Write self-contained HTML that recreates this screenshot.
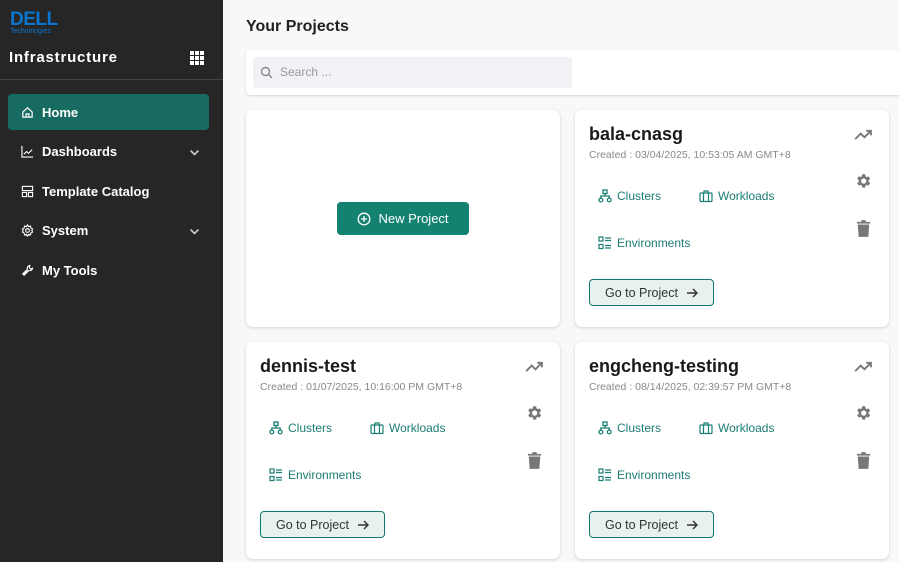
<!DOCTYPE html>
<html><head><meta charset="utf-8"><style>
*{margin:0;padding:0;box-sizing:border-box}
body{width:899px;height:562px;overflow:hidden;font-family:"Liberation Sans",sans-serif;background:#f7f8fa;position:relative}
.sb{position:absolute;left:0;top:0;width:223px;height:562px;background:#262626;color:#fff}
.logo{position:absolute;left:10px;top:11px;color:#0a76d0;font-weight:bold;font-size:19px;letter-spacing:-0.5px;line-height:17px}
.logo small{display:block;font-size:7px;font-weight:normal;letter-spacing:0;line-height:8px}
.infra{position:absolute;left:9px;top:49px;font-size:15px;font-weight:bold;letter-spacing:0.8px}
.grid{position:absolute;left:190px;top:51px;width:14px;height:14px;display:grid;grid-template-columns:repeat(3,4px);gap:1px}
.grid i{background:#fff;display:block}
.div{position:absolute;left:0;top:79px;width:223px;height:1px;background:#444}
.nav{position:absolute;left:8px;width:201px;height:36px;display:flex;align-items:center;padding-left:13px;font-size:13px;font-weight:bold;gap:8px}
.nav.act{background:#176b60;border-radius:4px}
.nav svg{width:13px;height:13px}
.chev{position:absolute;right:8px;top:13px}
.title{position:absolute;left:246px;top:18px;font-size:16px;font-weight:bold;color:#222}
.sbox{position:absolute;left:246px;top:50px;width:660px;height:45px;background:#fff;border-radius:4px;box-shadow:0 1px 2px rgba(0,0,0,.15)}
.sin{position:absolute;left:7px;top:7px;width:319px;height:31px;background:#f0f2f5;border-radius:3px;font-size:12px;color:#999;padding:8px 0 0 27px}
.sin svg{position:absolute;left:7px;top:9px}
.card{position:absolute;width:314px;height:217px;background:#fff;border-radius:7px;box-shadow:0 1px 3px rgba(0,0,0,.15)}
.nm{position:absolute;left:14px;top:14px;font-size:18px;font-weight:bold;color:#1a1a1a}
.cr{position:absolute;left:14px;top:39px;font-size:10.5px;color:#888}
.lk{position:absolute;font-size:12px;color:#1b7d73;display:flex;align-items:center;gap:5px}
.btn{position:absolute;left:14px;top:169px;width:125px;height:27px;background:#e7f2ef;border:1px solid #137a6c;border-radius:4px;font-size:12.5px;color:#333;display:flex;align-items:center;justify-content:center;gap:8px}
.ic{position:absolute}
.np{position:absolute;left:91px;top:92px;width:132px;height:33px;background:#138271;border-radius:4px;color:#fff;font-size:13px;display:flex;align-items:center;justify-content:center;gap:7px}
</style></head><body>
<div class="sb">
<div class="logo">DELL<small>Technologies</small></div>
<div class="infra">Infrastructure</div>
<div class="grid"><i></i><i></i><i></i><i></i><i></i><i></i><i></i><i></i><i></i></div>
<div class="div"></div>
<div class="nav act" style="top:94px"><svg viewBox="0 0 14 14" fill="none" stroke="#fff" stroke-width="1.3"><path d="M2 6.5L7 2l5 4.5V12H2z M5.5 12V8.5h3V12"/></svg>Home</div>
<div class="nav" style="top:133px"><svg viewBox="0 0 14 14" fill="none" stroke="#fff" stroke-width="1.2"><path d="M1 1v12h12 M3 10l3-3 2 2 4-4"/></svg>Dashboards<svg class="chev" width="10" height="10" viewBox="0 0 10 10" fill="none" stroke="#ccc" stroke-width="1.3"><path d="M2 3.5l3 3 3-3"/></svg></div>
<div class="nav" style="top:173px"><svg viewBox="0 0 14 14" fill="none" stroke="#fff" stroke-width="1.2"><rect x="1.5" y="1.5" width="11" height="4.5"/><rect x="1.5" y="8" width="4.5" height="4.5"/><rect x="8" y="8" width="4.5" height="4.5"/></svg>Template Catalog</div>
<div class="nav" style="top:212px"><svg viewBox="0 0 14 14" fill="none" stroke="#fff" stroke-width="1.2"><circle cx="7" cy="7" r="2"/><path d="M7 1l1.2 1.8 2-.6.4 2.1 1.9 1L11.6 7l.9 1.7-1.9 1-.4 2.1-2-.6L7 13l-1.2-1.8-2 .6-.4-2.1-1.9-1L2.4 7l-.9-1.7 1.9-1 .4-2.1 2 .6z"/></svg>System<svg class="chev" width="10" height="10" viewBox="0 0 10 10" fill="none" stroke="#ccc" stroke-width="1.3"><path d="M2 3.5l3 3 3-3"/></svg></div>
<div class="nav" style="top:252px"><svg viewBox="0 0 14 14" fill="none" stroke="#fff" stroke-width="1.2"><path d="M2 12l5-5 M9.5 1.5a3 3 0 0 0-2.5 4L2 10.5 3.5 12l5-5a3 3 0 0 0 4-2.5l-2 1-1.5-1.5z"/></svg>My Tools</div>
</div>
<div class="title">Your Projects</div>
<div class="sbox"><div class="sin"><svg width="13" height="13" viewBox="0 0 13 13" fill="none" stroke="#888" stroke-width="1.4"><circle cx="5.5" cy="5.5" r="4"/><path d="M8.5 8.5l3.5 3.5"/></svg>Search ...</div></div>

<div class="card" style="left:246px;top:110px"><div class="np"><svg width="14" height="14" viewBox="0 0 14 14" fill="none" stroke="#fff" stroke-width="1.3"><circle cx="7" cy="7" r="5.8"/><path d="M7 4v6M4 7h6"/></svg>New Project</div></div>

<div class="card" style="left:575px;top:110px">
<div class="nm">bala-cnasg</div><div class="cr">Created : 03/04/2025, 10:53:05 AM GMT+8</div>
<div class="lk" style="left:23px;top:79px"><svg width="14" height="14" viewBox="0 0 14 14" fill="none" stroke="#1b7d73" stroke-width="1.3"><rect x="5" y="1" width="4" height="3.5"/><circle cx="2.8" cy="11" r="1.9"/><circle cx="11.2" cy="11" r="1.9"/><path d="M7 4.5v2.5M2.8 9V7h8.4v2"/></svg>Clusters</div>
<div class="lk" style="left:124px;top:79px"><svg width="14" height="14" viewBox="0 0 14 14" fill="none" stroke="#1b7d73" stroke-width="1.2"><rect x="1" y="4" width="12" height="8.5" rx="1"/><path d="M5 4V2h4v2M4.5 4v8.5M9.5 4v8.5"/></svg>Workloads</div>
<div class="lk" style="left:23px;top:126px"><svg width="14" height="14" viewBox="0 0 14 14" fill="none" stroke="#1b7d73" stroke-width="1.2"><rect x="1" y="1" width="4" height="4"/><rect x="1" y="8.5" width="4" height="4"/><path d="M7 2h6M7 4.5h6M7 9.5h6M7 12h6"/></svg>Environments</div>
<div class="btn">Go to Project <svg width="12" height="10" viewBox="0 0 12 10" fill="none" stroke="#333" stroke-width="1.4"><path d="M1 5h10M7 1l4 4-4 4"/></svg></div>
<svg class="ic" style="left:279px;top:18px" width="19" height="13" viewBox="0 0 20 14" fill="none" stroke="#777" stroke-width="2"><path d="M1 12l6-6 4 4 7-7M13 3h5v5"/></svg>
<svg class="ic" style="left:279px;top:62px" width="18" height="18" viewBox="0 0 24 24" fill="#777"><path d="M19.4 13a7.5 7.5 0 0 0 0-2l2.1-1.6-2-3.5-2.5 1a7.3 7.3 0 0 0-1.7-1L14.9 3h-4l-.4 2.7a7.3 7.3 0 0 0-1.7 1l-2.5-1-2 3.5L6.4 11a7.5 7.5 0 0 0 0 2l-2.1 1.6 2 3.5 2.5-1c.5.4 1.1.7 1.7 1l.4 2.7h4l.4-2.7c.6-.3 1.2-.6 1.7-1l2.5 1 2-3.5zM12.9 15.5a3.5 3.5 0 1 1 0-7 3.5 3.5 0 0 1 0 7z"/></svg>
<svg class="ic" style="left:281px;top:110px" width="15" height="17" viewBox="0 0 17 19" fill="#777"><path d="M1 2h15v2H1zM6 0h5v2H6zM2 5h13l-1 14H3z"/></svg>
</div>
<div class="card" style="left:246px;top:342px">
<div class="nm">dennis-test</div><div class="cr">Created : 01/07/2025, 10:16:00 PM GMT+8</div>
<div class="lk" style="left:23px;top:79px"><svg width="14" height="14" viewBox="0 0 14 14" fill="none" stroke="#1b7d73" stroke-width="1.3"><rect x="5" y="1" width="4" height="3.5"/><circle cx="2.8" cy="11" r="1.9"/><circle cx="11.2" cy="11" r="1.9"/><path d="M7 4.5v2.5M2.8 9V7h8.4v2"/></svg>Clusters</div>
<div class="lk" style="left:124px;top:79px"><svg width="14" height="14" viewBox="0 0 14 14" fill="none" stroke="#1b7d73" stroke-width="1.2"><rect x="1" y="4" width="12" height="8.5" rx="1"/><path d="M5 4V2h4v2M4.5 4v8.5M9.5 4v8.5"/></svg>Workloads</div>
<div class="lk" style="left:23px;top:126px"><svg width="14" height="14" viewBox="0 0 14 14" fill="none" stroke="#1b7d73" stroke-width="1.2"><rect x="1" y="1" width="4" height="4"/><rect x="1" y="8.5" width="4" height="4"/><path d="M7 2h6M7 4.5h6M7 9.5h6M7 12h6"/></svg>Environments</div>
<div class="btn">Go to Project <svg width="12" height="10" viewBox="0 0 12 10" fill="none" stroke="#333" stroke-width="1.4"><path d="M1 5h10M7 1l4 4-4 4"/></svg></div>
<svg class="ic" style="left:279px;top:18px" width="19" height="13" viewBox="0 0 20 14" fill="none" stroke="#777" stroke-width="2"><path d="M1 12l6-6 4 4 7-7M13 3h5v5"/></svg>
<svg class="ic" style="left:279px;top:62px" width="18" height="18" viewBox="0 0 24 24" fill="#777"><path d="M19.4 13a7.5 7.5 0 0 0 0-2l2.1-1.6-2-3.5-2.5 1a7.3 7.3 0 0 0-1.7-1L14.9 3h-4l-.4 2.7a7.3 7.3 0 0 0-1.7 1l-2.5-1-2 3.5L6.4 11a7.5 7.5 0 0 0 0 2l-2.1 1.6 2 3.5 2.5-1c.5.4 1.1.7 1.7 1l.4 2.7h4l.4-2.7c.6-.3 1.2-.6 1.7-1l2.5 1 2-3.5zM12.9 15.5a3.5 3.5 0 1 1 0-7 3.5 3.5 0 0 1 0 7z"/></svg>
<svg class="ic" style="left:281px;top:110px" width="15" height="17" viewBox="0 0 17 19" fill="#777"><path d="M1 2h15v2H1zM6 0h5v2H6zM2 5h13l-1 14H3z"/></svg>
</div>
<div class="card" style="left:575px;top:342px">
<div class="nm">engcheng-testing</div><div class="cr">Created : 08/14/2025, 02:39:57 PM GMT+8</div>
<div class="lk" style="left:23px;top:79px"><svg width="14" height="14" viewBox="0 0 14 14" fill="none" stroke="#1b7d73" stroke-width="1.3"><rect x="5" y="1" width="4" height="3.5"/><circle cx="2.8" cy="11" r="1.9"/><circle cx="11.2" cy="11" r="1.9"/><path d="M7 4.5v2.5M2.8 9V7h8.4v2"/></svg>Clusters</div>
<div class="lk" style="left:124px;top:79px"><svg width="14" height="14" viewBox="0 0 14 14" fill="none" stroke="#1b7d73" stroke-width="1.2"><rect x="1" y="4" width="12" height="8.5" rx="1"/><path d="M5 4V2h4v2M4.5 4v8.5M9.5 4v8.5"/></svg>Workloads</div>
<div class="lk" style="left:23px;top:126px"><svg width="14" height="14" viewBox="0 0 14 14" fill="none" stroke="#1b7d73" stroke-width="1.2"><rect x="1" y="1" width="4" height="4"/><rect x="1" y="8.5" width="4" height="4"/><path d="M7 2h6M7 4.5h6M7 9.5h6M7 12h6"/></svg>Environments</div>
<div class="btn">Go to Project <svg width="12" height="10" viewBox="0 0 12 10" fill="none" stroke="#333" stroke-width="1.4"><path d="M1 5h10M7 1l4 4-4 4"/></svg></div>
<svg class="ic" style="left:279px;top:18px" width="19" height="13" viewBox="0 0 20 14" fill="none" stroke="#777" stroke-width="2"><path d="M1 12l6-6 4 4 7-7M13 3h5v5"/></svg>
<svg class="ic" style="left:279px;top:62px" width="18" height="18" viewBox="0 0 24 24" fill="#777"><path d="M19.4 13a7.5 7.5 0 0 0 0-2l2.1-1.6-2-3.5-2.5 1a7.3 7.3 0 0 0-1.7-1L14.9 3h-4l-.4 2.7a7.3 7.3 0 0 0-1.7 1l-2.5-1-2 3.5L6.4 11a7.5 7.5 0 0 0 0 2l-2.1 1.6 2 3.5 2.5-1c.5.4 1.1.7 1.7 1l.4 2.7h4l.4-2.7c.6-.3 1.2-.6 1.7-1l2.5 1 2-3.5zM12.9 15.5a3.5 3.5 0 1 1 0-7 3.5 3.5 0 0 1 0 7z"/></svg>
<svg class="ic" style="left:281px;top:110px" width="15" height="17" viewBox="0 0 17 19" fill="#777"><path d="M1 2h15v2H1zM6 0h5v2H6zM2 5h13l-1 14H3z"/></svg>
</div>
</body></html>
